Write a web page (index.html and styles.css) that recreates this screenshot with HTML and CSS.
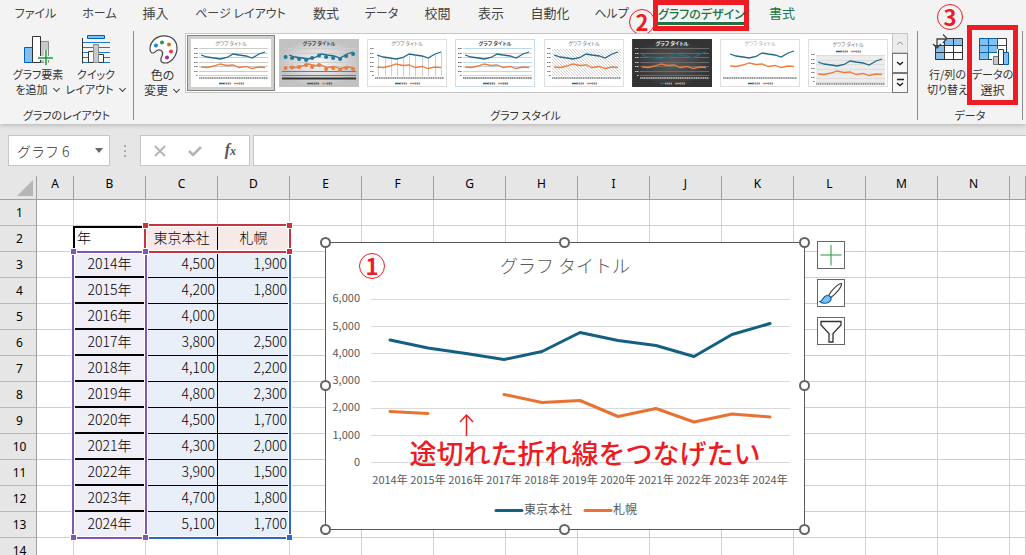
FILE: index.html
```html
<!DOCTYPE html>
<html lang="ja">
<head>
<meta charset="utf-8">
<title>グラフのデザイン</title>
<link rel="stylesheet" href="styles.css">
</head>
<body>
<svg class="defs" aria-hidden="true">
  <defs>
    <radialGradient id="dark"><stop offset="0" stop-color="#5c5c5c"/><stop offset="1" stop-color="#333"/></radialGradient>
    <radialGradient id="silver"><stop offset="0" stop-color="#fafafa"/><stop offset="1" stop-color="#c2c2c2"/></radialGradient>
    <pattern id="hatch" width="3" height="3" patternUnits="userSpaceOnUse"><path d="M0 0l3 3" stroke="#bbb" stroke-width=".7"/></pattern>
    <symbol id="t-grid" viewBox="0 0 80 48"><path d="M8 9.5h69M8 14.5h69M8 18.5h69M8 23.5h69M8 27.5h69M8 32.5h69M8 36.5h69" stroke="currentColor" fill="none"/></symbol>
    <symbol id="t-ticks" viewBox="0 0 80 48"><path d="M3 9.5h4M3 14.5h4M3 18.5h4M3 23.5h4M3 27.5h4M3 32.5h4M5 36.5h2" stroke="currentColor" stroke-dasharray="1.5 .5" fill="none"/><path d="M8 39h69" stroke="currentColor" stroke-width="1.6" stroke-dasharray="1.3 .5" fill="none"/></symbol>
    <symbol id="t-lines" viewBox="0 0 80 48"><path d="M10 16l6 2 7 1 6 1 7-1.500 6-3.500 6 1 7 1 6 2 7-4 6-2" stroke="#1f6a8c" stroke-width="1.3" fill="none"/><path d="M10 28l6 .5 7-1.500 6-2 7 1.500 6-.5 6 2.500 7-1 6 2 7-1.500 6 .5" stroke="#ed7d3c" stroke-width="1.3" fill="none"/></symbol>
    <symbol id="t-legend" viewBox="0 0 80 48"><path d="M28 44.500h5" stroke="#1f6a8c" stroke-width="1.500"/><path d="M43 44.500h5" stroke="#ed7d3c" stroke-width="1.500"/><path d="M33 44.500h7M48 44.500h5" stroke="currentColor" stroke-width="2" stroke-dasharray="1.500 .4"/></symbol>
  </defs>
</svg>
<div class="app">
  <header class="ribbon">
    <nav class="tabs">
      <a href="#">ファイル</a><a href="#">ホーム</a><a href="#" class="kanji">挿入</a><a href="#">ページ レイアウト</a><a href="#" class="kanji">数式</a><a href="#">データ</a><a href="#" class="kanji">校閲</a><a href="#" class="kanji">表示</a><a href="#" class="kanji">自動化</a><a href="#">ヘルプ</a>
      <a href="#" class="current"><span>グラフのデザイン</span><b class="mark mark-2">2</b></a>
      <a href="#" class="kanji context">書式</a>
    </nav>
    <div class="groups">
      <section class="group group-layout">
        <div class="tools">
          <button class="tool">
            <svg width="32" height="32" viewBox="0 0 32 32"><path d="M2.500 12.500h8v15h-8z" fill="#83beec" stroke="#0063b1"/><path d="M18.500 6.500h8v21h-8z" fill="#c8c8c8" stroke="#8a8a8a"/><path d="M10.500 1.500h8v26h-8z" fill="#fff" stroke="#333"/><path d="M24 15v16M16 23h16" stroke="#f3f3f3" stroke-width="4"/><path d="M24 15v15M16 23h15" stroke="#1e9a3c" stroke-width="1.500"/></svg>
            <span>グラフ要素</span><span>を追加<i class="chev"></i></span>
          </button>
          <button class="tool">
            <svg width="32" height="32" viewBox="0 0 32 32"><path d="M2.500 3v25.500" fill="none" stroke="#333"/><path d="M3 7.500h27M3 12.500h27M3 17.500h27M3 22.500h27M3 27.500h27" stroke="#1979ca"/><path d="M7.500.5h17v3h-17z" fill="#83beec" stroke="#0063b1"/><path d="M8.500 16.500h5v11h-5zM18.500 19.500h5v8h-5z" fill="#fff" stroke="#333"/><path d="M13.500 9.500h5v18h-5z" fill="#c8c8c8" stroke="#8a8a8a"/></svg>
            <span>クイック</span><span>レイアウト<i class="chev"></i></span>
          </button>
        </div>
        <h2>グラフのレイアウト</h2>
      </section>
      <section class="group group-style">
        <div class="tools">
          <button class="tool">
            <svg width="32" height="32" viewBox="0 0 32 32"><path d="M3 14C3 7 9 .8 17 .8c8 0 13 5 13 12.500C30 21 24 28 18 28c-5 0-5-4-3-7 2-4-1-7-4-6-3 1-3 3-5 3-2 0-3-2-3-4z" fill="#fff" stroke="#444" stroke-width="1.200"/><circle cx="9" cy="10.500" r="2" fill="#1a86d0"/><circle cx="15" cy="7.500" r="2" fill="#239a48"/><circle cx="22" cy="9.500" r="2" fill="#e07000"/><circle cx="24" cy="16.500" r="2" fill="#ee3b40"/><circle cx="20" cy="22.500" r="2" fill="#9b2fa5"/></svg>
            <span class="kanji">色の</span><span class="kanji">変更<i class="chev"></i></span>
          </button>
          <div class="gallery">
            <button class="style selected" aria-label="スタイル 1"><svg viewBox="0 0 80 48"><rect width="80" height="48" fill="#fff"/><text x="40" y="6">グラフ タイトル</text><use href="#t-grid" color="#ccc"/><use href="#t-ticks" color="#777"/><use href="#t-lines"/><use href="#t-legend" color="#888"/></svg></button>
            <button class="style" aria-label="スタイル 2"><svg viewBox="0 0 80 48"><rect width="80" height="48" fill="url(#silver)"/><text x="40" y="6" class="strong">グラフ タイトル</text><use href="#t-grid" color="#ccc"/><path d="M3 32.500h74M3 36.500h74" stroke="#777"/><path d="M3 39.500h74" stroke="#333" stroke-width="2"/><use href="#t-lines"/><path d="M6.500 18h.1M13 19h.1M20 20h.1M27 21h.1M33 19h.1M40 16.500h.1M47 18h.1M54 19h.1M61 20h.1M67 17h.1M74 15h.1" stroke="#1f7a9c" stroke-width="4" stroke-linecap="round"/><path d="M6.500 29h.1M13 28.500h.1M20 28h.1M27 26h.1M33 28h.1M40 26h.1M47 30h.1M54 29h.1M61 31h.1M67 29h.1M74 30h.1" stroke="#ed7d3c" stroke-width="4" stroke-linecap="round"/><use href="#t-legend" color="#666"/></svg></button>
            <button class="style" aria-label="スタイル 3"><svg viewBox="0 0 80 48"><rect x=".5" y=".5" width="79" height="47" fill="#fff" stroke="#ddd"/><text x="40" y="6">グラフ タイトル</text><path d="M11.500 17v20M18.500 18v19M24.500 19v18M30.500 20v17M36.500 18v19M42.500 15v22M48.500 17v20M55.500 18v19M61.500 19v18M68.500 16v21M74.500 13v24" stroke="#ccc"/><use href="#t-ticks" color="#777"/><use href="#t-lines"/><use href="#t-legend" color="#888"/></svg></button>
            <button class="style" aria-label="スタイル 4"><svg viewBox="0 0 80 48"><rect x=".5" y=".5" width="79" height="47" fill="#fff" stroke="#c8dcec"/><text x="40" y="6" class="strong">グラフ タイトル</text><use href="#t-grid" color="#c0d8ec"/><use href="#t-ticks" color="#666"/><use href="#t-lines"/><use href="#t-legend" color="#777"/></svg></button>
            <button class="style" aria-label="スタイル 5"><svg viewBox="0 0 80 48"><rect x=".5" y=".5" width="79" height="47" fill="#fff" stroke="#ddd"/><text x="40" y="6">グラフ タイトル</text><path d="M8 10h69v27H8z" fill="url(#hatch)"/><use href="#t-ticks" color="#777"/><use href="#t-lines"/><use href="#t-legend" color="#888"/></svg></button>
            <button class="style" aria-label="スタイル 6"><svg viewBox="0 0 80 48"><rect width="80" height="48" fill="url(#dark)"/><text x="40" y="6" class="light">グラフ タイトル</text><use href="#t-grid" color="#6a6a6a"/><use href="#t-ticks" color="#ccc"/><use href="#t-lines"/><use href="#t-legend" color="#999"/></svg></button>
            <button class="style" aria-label="スタイル 7"><svg viewBox="0 0 80 48"><rect x=".5" y=".5" width="79" height="47" fill="#fff" stroke="#ddd"/><text x="40" y="6" class="faint">グラフ タイトル</text><path d="M3 39h74" stroke="#777" stroke-width="1.600" stroke-dasharray="1.300 .5"/><use href="#t-lines" y="-1"/><use href="#t-legend" color="#888"/></svg></button>
            <button class="style" aria-label="スタイル 8"><svg viewBox="0 0 80 48"><rect x=".5" y=".5" width="79" height="47" fill="#fff" stroke="#ddd"/><text x="40" y="7">グラフ タイトル</text><path d="M8 16h69v27H8z" fill="#ececec"/><use href="#t-grid" y="7" color="#ddd"/><use href="#t-ticks" y="6" color="#777"/><use href="#t-lines" y="7"/><use href="#t-legend" y="-32" color="#888"/></svg></button>
            <div class="scroller">
              <button disabled aria-label="上へ"><svg width="10" height="10"><path d="M2 6.500l3-2.500 3 2.500" fill="none" stroke="#999"/></svg></button>
              <button aria-label="下へ"><svg width="10" height="10"><path d="M2 4l3 2.500L8 4" fill="none" stroke="#222" stroke-width="1.500"/></svg></button>
              <button aria-label="その他"><svg width="10" height="10"><path d="M2 1.500h7M2 5l3 2.500L8 5" fill="none" stroke="#222" stroke-width="1.500"/></svg></button>
            </div>
          </div>
        </div>
        <h2>グラフ スタイル</h2>
      </section>
      <section class="group group-data">
        <b class="mark mark-3">3</b>
        <div class="tools">
          <button class="tool">
            <svg width="32" height="32" viewBox="0 0 32 32"><path d="M3.500 3.500h27v21h-27z" fill="#fff"/><path d="M12.500 3.500h18v7h-18zM3.500 10.500h9v14h-9z" fill="#83beec"/><path d="M3.500 8v16.500h27v-21H14M12.500 6v18.500M21.500 3.500v21M3.500 10.500h27M3.500 17.500h27" fill="none" stroke="#333"/><path d="M-1 -2h13v12H-1z" fill="#f3f3f3"/><path d="M5 13V4h9M1 9l4 4 4-4M11-.5L15 3.500 11 8" fill="none" stroke="#444" stroke-width="1.300"/></svg>
            <span>行/列の</span><span>切り替え</span>
          </button>
          <button class="tool boxed">
            <svg width="32" height="32" viewBox="0 0 32 32"><path d="M2.500 3.500h27v21h-27z" fill="#fff" stroke="#333"/><path d="M2.500 3.500h18v14h-9v7h-9z" fill="#83beec" stroke="#0063b1"/><path d="M11.500 3.500v21M20.500 3.500v14M2.500 10.500h27M2.500 17.500h18" fill="none" stroke="#0063b1"/><path d="M15 20h5v-6h8v3h5v14H15z" fill="#f3f3f3"/><path d="M16.500 21.500h5v8h-5z" fill="#c8c8c8" stroke="#777"/><path d="M26.500 17.500h5v12h-5z" fill="#83beec" stroke="#0063b1"/><path d="M21.500 14.500h5v15h-5z" fill="#fff" stroke="#333"/></svg>
            <span>データの</span><span class="kanji">選択</span>
          </button>
        </div>
        <h2>データ</h2>
      </section>
    </div>
  </header>

  <div class="formula-bar">
    <div class="name-box"><input value="グラフ 6" aria-label="名前ボックス"><button aria-label="一覧"><svg width="8" height="5"><path d="M0 0h8L4 5z" fill="#666"/></svg></button></div>
    <div class="grip"><i></i><i></i><i></i></div>
    <div class="fx-box">
      <button aria-label="キャンセル"><svg width="14" height="14"><path d="M2 2l10 10M12 2L2 12" stroke="#b4b4b4" stroke-width="1.800"/></svg></button>
      <button aria-label="入力"><svg width="14" height="14"><path d="M1 7l4 4 8-8" fill="none" stroke="#b4b4b4" stroke-width="2.500"/></svg></button>
      <button class="fx" aria-label="関数の挿入">f<small>x</small></button>
    </div>
    <input class="formula" aria-label="数式バー">
  </div>

  <main class="sheet">
    <table>
      <colgroup><col class="c-head"><col class="c-a"><col class="c"><col class="c"><col class="c"><col class="c"><col class="c"><col class="c"><col class="c"><col class="c"><col class="c"><col class="c"><col class="c"><col class="c"><col class="c"><col></colgroup>
      <thead><tr><th><svg class="corner" width="16" height="16"><path d="M16 0v16H0z" fill="#b4b6b8"/></svg></th><th>A</th><th>B</th><th>C</th><th>D</th><th>E</th><th>F</th><th>G</th><th>H</th><th>I</th><th>J</th><th>K</th><th>L</th><th>M</th><th>N</th><th></th></tr></thead>
      <tbody>
        <tr><th>1</th><td></td><td></td><td></td><td></td><td></td><td></td><td></td><td></td><td></td><td></td><td></td><td></td><td></td><td></td><td></td></tr>
        <tr><th>2</th><td></td><td class="corner-cell">年</td><td class="series">東京本社</td><td class="series">札幌</td><td></td><td></td><td></td><td></td><td></td><td></td><td></td><td></td><td></td><td></td><td></td></tr>
        <tr><th>3</th><td></td><td class="cat">2014年</td><td class="val">4,500</td><td class="val">1,900</td><td></td><td></td><td></td><td></td><td></td><td></td><td></td><td></td><td></td><td></td><td></td></tr>
        <tr><th>4</th><td></td><td class="cat">2015年</td><td class="val">4,200</td><td class="val">1,800</td><td></td><td></td><td></td><td></td><td></td><td></td><td></td><td></td><td></td><td></td><td></td></tr>
        <tr><th>5</th><td></td><td class="cat">2016年</td><td class="val">4,000</td><td class="val"></td><td></td><td></td><td></td><td></td><td></td><td></td><td></td><td></td><td></td><td></td><td></td></tr>
        <tr><th>6</th><td></td><td class="cat">2017年</td><td class="val">3,800</td><td class="val">2,500</td><td></td><td></td><td></td><td></td><td></td><td></td><td></td><td></td><td></td><td></td><td></td></tr>
        <tr><th>7</th><td></td><td class="cat">2018年</td><td class="val">4,100</td><td class="val">2,200</td><td></td><td></td><td></td><td></td><td></td><td></td><td></td><td></td><td></td><td></td><td></td></tr>
        <tr><th>8</th><td></td><td class="cat">2019年</td><td class="val">4,800</td><td class="val">2,300</td><td></td><td></td><td></td><td></td><td></td><td></td><td></td><td></td><td></td><td></td><td></td></tr>
        <tr><th>9</th><td></td><td class="cat">2020年</td><td class="val">4,500</td><td class="val">1,700</td><td></td><td></td><td></td><td></td><td></td><td></td><td></td><td></td><td></td><td></td><td></td></tr>
        <tr><th>10</th><td></td><td class="cat">2021年</td><td class="val">4,300</td><td class="val">2,000</td><td></td><td></td><td></td><td></td><td></td><td></td><td></td><td></td><td></td><td></td><td></td></tr>
        <tr><th>11</th><td></td><td class="cat">2022年</td><td class="val">3,900</td><td class="val">1,500</td><td></td><td></td><td></td><td></td><td></td><td></td><td></td><td></td><td></td><td></td><td></td></tr>
        <tr><th>12</th><td></td><td class="cat">2023年</td><td class="val">4,700</td><td class="val">1,800</td><td></td><td></td><td></td><td></td><td></td><td></td><td></td><td></td><td></td><td></td><td></td></tr>
        <tr><th>13</th><td></td><td class="cat">2024年</td><td class="val">5,100</td><td class="val">1,700</td><td></td><td></td><td></td><td></td><td></td><td></td><td></td><td></td><td></td><td></td><td></td></tr>
        <tr><th>14</th><td></td><td></td><td></td><td></td><td></td><td></td><td></td><td></td><td></td><td></td><td></td><td></td><td></td><td></td><td></td></tr>
      </tbody>
    </table>

    <svg class="ranges" width="300" height="370" aria-hidden="true">
      <g fill="none" stroke="#fff" stroke-width="4"><path d="M290 76v286H146"/><path d="M73 76h73v286H73z"/><path d="M145 49h145v27H145z"/></g>
      <g fill="none" stroke-width="2"><path d="M290 76v286H146" stroke="#2f66c8"/><path d="M73 76h73v286H73z" stroke="#8256b8"/><path d="M145 49h145v27H145z" stroke="#c5343f"/></g>
      <g stroke="#fff"><path d="M286.500 358.500h6v6h-6z" fill="#2f66c8"/><path d="M142.500 46.500h6v6h-6zM286.500 46.500h6v6h-6zM286.500 72.500h6v6h-6z" fill="#c5343f"/><path d="M70.500 72.500h6v6h-6zM142.500 72.500h6v6h-6zM70.500 358.500h6v6h-6zM142.500 358.500h6v6h-6z" fill="#8256b8"/></g>
    </svg>

    <figure class="chart">
      <svg width="480" height="288" viewBox="0 0 480 288">
        <rect x=".5" y=".5" width="479" height="287" fill="#fff" stroke="#595959"/>
        <text class="title" x="240" y="31">グラフ タイトル</text>
        <path d="M46 57.500h419M46 84.500h419M46 111.500h419M46 139.500h419M46 166.500h419M46 193.500h419M46 220.500h419" stroke="#d9d9d9"/>
        <g class="axis-y"><text x="35" y="60">6,000</text><text x="35" y="88">5,000</text><text x="35" y="115">4,000</text><text x="35" y="142">3,000</text><text x="35" y="169">2,000</text><text x="35" y="197">1,000</text><text x="35" y="224">0</text></g>
        <g class="axis-x"><text x="65" y="242">2014年</text><text x="103" y="242">2015年</text><text x="141" y="242">2016年</text><text x="179" y="242">2017年</text><text x="217" y="242">2018年</text><text x="255" y="242">2019年</text><text x="293" y="242">2020年</text><text x="331" y="242">2021年</text><text x="369" y="242">2022年</text><text x="407" y="242">2023年</text><text x="445" y="242">2024年</text></g>
        <g fill="none" stroke-width="3" stroke-linecap="round" stroke-linejoin="round">
          <path d="M65 98l38 8 38 5.500 38 6 38-8 38-19 38 8 38 5 38 11 38-22 38-11" stroke="#156082"/>
          <path d="M65 169.500l38 2M179 152.500l38 8 38-2 38 16 38-8 38 13.500 38-8 38 3" stroke="#e97132"/>
          <path d="M171 268.500h26" stroke="#156082"/><path d="M260 268.500h26" stroke="#e97132"/>
        </g>
        <g class="legend"><text x="199" y="272">東京本社</text><text x="288" y="272">札幌</text></g>
        <path d="M141.500 194v-21M135 180l6.500-7 6.500 7" fill="none" stroke="#ed1c24" stroke-width="1.500"/>
        <text class="note" x="260" y="222">途切れた折れ線をつなげたい</text>
        <g fill="#fff" stroke="#636363" stroke-width="2"><circle cx=".5" cy=".5" r="4.500"/><circle cx="239.500" cy=".5" r="4.500"/><circle cx="479.500" cy=".5" r="4.500"/><circle cx=".5" cy="143.500" r="4.500"/><circle cx="479.500" cy="143.500" r="4.500"/><circle cx=".5" cy="287.500" r="4.500"/><circle cx="239.500" cy="287.500" r="4.500"/><circle cx="479.500" cy="287.500" r="4.500"/></g>
      </svg>
      <b class="mark mark-1">1</b>
      <div class="chart-buttons">
        <button aria-label="グラフ要素"><svg width="26" height="26"><path d="M13 3v20.500M2.500 13h21" stroke="#1e9a3c"/></svg></button>
        <button aria-label="グラフ スタイル"><svg width="26" height="26"><path d="M10.500 15.500C14 10 20 3.500 23.500 3.500 24 7 18 13.500 13 17.500z" fill="#fff" stroke="#444" stroke-width="1.200"/><path d="M2 21.500c3 0 2.500-5.500 7-6 3-.2 5 2.500 3.500 5-2 3.500-8 3.500-10.500 1z" fill="#83beec" stroke="#0063b1" stroke-width="1.200"/></svg></button>
        <button aria-label="グラフ フィルター"><svg width="26" height="26"><path d="M3 3.500h20v3.500l-8 8.500v8.500h-4v-8.500L3 7z" fill="#fff" stroke="#333" stroke-width="1.300"/></svg></button>
      </div>
    </figure>
  </main>
</div>
</body>
</html>
```
FILE: styles.css
```css
* { box-sizing: border-box; }
body { margin: 0; font-family: "Noto Sans CJK JP", sans-serif; color: #333; }
button, input { font: inherit; color: inherit; border: 0; background: none; padding: 0; border-radius: 0; }
.defs { position: absolute; width: 0; height: 0; }
.app { display: flex; flex-direction: column; height: 100vh; overflow: hidden; background: #e6e6e6; }

/* Ribbon */
.ribbon { flex: none; background: #f3f3f3; box-shadow: 0 1px 5px #b0b0b0; font-size: 12px; font-feature-settings: "palt"; }
.tabs { display: grid; grid-template-columns: 69px 59px 53px 117px 54px 57px 55px 52px 66px 57px 109px 66px; padding-left: 1px; height: 31px; line-height: 26px; }
.tabs a { color: #444; text-decoration: none; text-align: center; white-space: nowrap; }
.tabs .kanji { font-size: 13px; }
.tabs .current { position: relative; margin-left: 13px; border: 5px solid #ed1c24; color: #217346; font-weight: 500; line-height: 17px; }
.current span { display: block; height: 20px; border-bottom: 3px solid #217346; }
.tabs .context { color: #217346; }
.groups { display: flex; height: 89px; margin-bottom: 4px; padding-right: 3px; }
.group { position: relative; display: flex; flex-direction: column; justify-content: space-between; border-right: 1px solid #8c8c8c; }
.group-layout { width: 134px; }
.group-style { flex: 1; }
.group-data { width: 105px; }
.group h2 { margin: 0; font-size: 11px; font-weight: 400; line-height: 10px; text-align: center; }
.tools { display: flex; }
.group-layout .tools { padding-left: 9px; }
.group-data .tools { padding-left: 7px; }
.tool { display: flex; flex-direction: column; align-items: center; width: 58px; padding-top: 4px; font-size: 11px; line-height: 15px; white-space: nowrap; }
.tool .kanji { font-size: 12px; }
.tool svg { overflow: visible; }
.group-style .tool { width: 51px; padding-left: 6px; }
.group-data .tool { width: 45px; }
.group-data .boxed { position: relative; width: 51px; height: 80px; margin: -6px 0 0 -3px; padding-top: 5px; border: 5px solid #ed1c24; background: #f3f3f3; }
.chev { display: inline-block; width: 5px; height: 5px; margin: 0 2px 3px 6px; border: solid #444; border-width: 0 1px 1px 0; transform: rotate(45deg); }
.gallery { display: flex; flex: 1; margin: 2px 9px 0 0; height: 60px; padding: 1px 0 1px 1px; border: 1px solid #c6c6c6; border-right: 0; background: #fff; }
.style { flex: 1; padding: 3px; border: 1px solid transparent; }
.style svg { display: block; width: 100%; height: 48px; }
.style.selected { background: #cfcfcc; border-color: #85857f; }
.style text { font-size: 5px; text-anchor: middle; fill: #777; }
.style .strong { font-weight: 700; fill: #444; }
.style .light { font-weight: 700; fill: #eee; }
.style .faint { fill: #aaa; }
.scroller { display: flex; flex-direction: column; width: 16px; margin: -2px 0; }
.scroller button { flex: 1; display: grid; place-items: center; border: 1px solid #777; background: #f8f8f8; }
.scroller button:disabled { border-color: #c6c6c6; background: #ececec; }

/* Numbered red callouts */
.mark { position: absolute; width: 26px; height: 26px; border: 1px solid #ed1c24; border-radius: 50%; color: #ed1c24; font: 700 22px/22px "Noto Sans CJK JP", sans-serif; text-align: center; }
.mark-1 { left: 34px; top: 11px; }
.mark-2 { left: -29px; top: 4px; }
.mark-3 { left: 19px; top: -27px; }

/* Formula bar */
.formula-bar { flex: none; display: flex; padding: 11px 0 10px 8px; height: 52px; }
.name-box, .fx-box, .formula { background: #fff; border: 1px solid #c6c6c6; }
.name-box { display: flex; width: 102px; padding: 0 6px 0 8px; font-size: 14px; font-weight: 300; }
.name-box input { flex: 1; min-width: 0; }
.name-box button { display: grid; place-items: center; }
.grip { display: flex; flex-direction: column; justify-content: center; align-items: center; gap: 3px; width: 30px; }
.grip i { width: 2px; height: 2px; background: #aaa; }
.fx-box { display: flex; width: 110px; padding: 0 1px; margin-right: 3px; }
.fx-box button { flex: 1; display: grid; place-items: center; }
.fx-box .fx { display: block; font: italic 700 16px/26px "Liberation Serif", serif; color: #555; }
.fx small { font-size: 12px; }
.formula { flex: 1; min-width: 0; border-right: 0; }

/* Sheet */
.sheet { flex: 1; position: relative; overflow: hidden; }
table { width: 100%; table-layout: fixed; border-spacing: 0; background: #fff; font-size: 14px; font-weight: 300; color: #000; }
.c-head, .c-a { width: 37px; }
.c { width: 72px; }
th { background: #e6e6e6; font: 400 12px/16px "Noto Sans", sans-serif; padding: 0; }
thead th { height: 24px; vertical-align: top; border-right: 1px solid #9e9e9e; border-bottom: 1px solid #9e9e9e; }
.corner { display: block; margin: 4px 3px 0 auto; }
tbody th { border-right: 1px solid #9e9e9e; border-bottom: 1px solid #b8b8b8; padding-left: 3px; }
tbody tr { height: 26px; }
td { height: 26px; padding: 0 2px 3px; line-height: 20px; border-right: 1px solid #d0d0d0; border-bottom: 1px solid #d0d0d0; white-space: nowrap; }
td.corner-cell { padding-left: 3px; box-shadow: inset 0 2px #000, -1px 0 #000, inset 1px 0 #000; }
.series { background: #f8e9e9; text-align: center; border-right-color: #000; }
.cat { background: #f0eef6; text-align: center; border-bottom: 2px solid #000; }
.val { background: #e9eff8; text-align: right; border-right-color: #000; border-bottom-color: #000; }
.ranges { position: absolute; left: 0; top: 0; }

/* Floating chart object */
.chart { position: absolute; left: 325px; top: 66px; margin: 0; }
.chart > svg { display: block; overflow: visible; }
.chart text { font-size: 11px; fill: #595959; }
.chart .title { font-size: 18px; font-weight: 300; text-anchor: middle; }
.axis-y text { text-anchor: end; }
.axis-x text { text-anchor: middle; }
.chart .legend text { font-size: 12px; }
.chart .note { font-size: 27px; font-weight: 500; fill: #ed1c24; text-anchor: middle; }
.chart-buttons { position: absolute; left: 492px; top: -1px; display: flex; flex-direction: column; gap: 10px; }
.chart-buttons button { width: 28px; height: 28px; border: 1px solid #666; background: #fff; }
.chart-buttons svg { display: block; }
```
